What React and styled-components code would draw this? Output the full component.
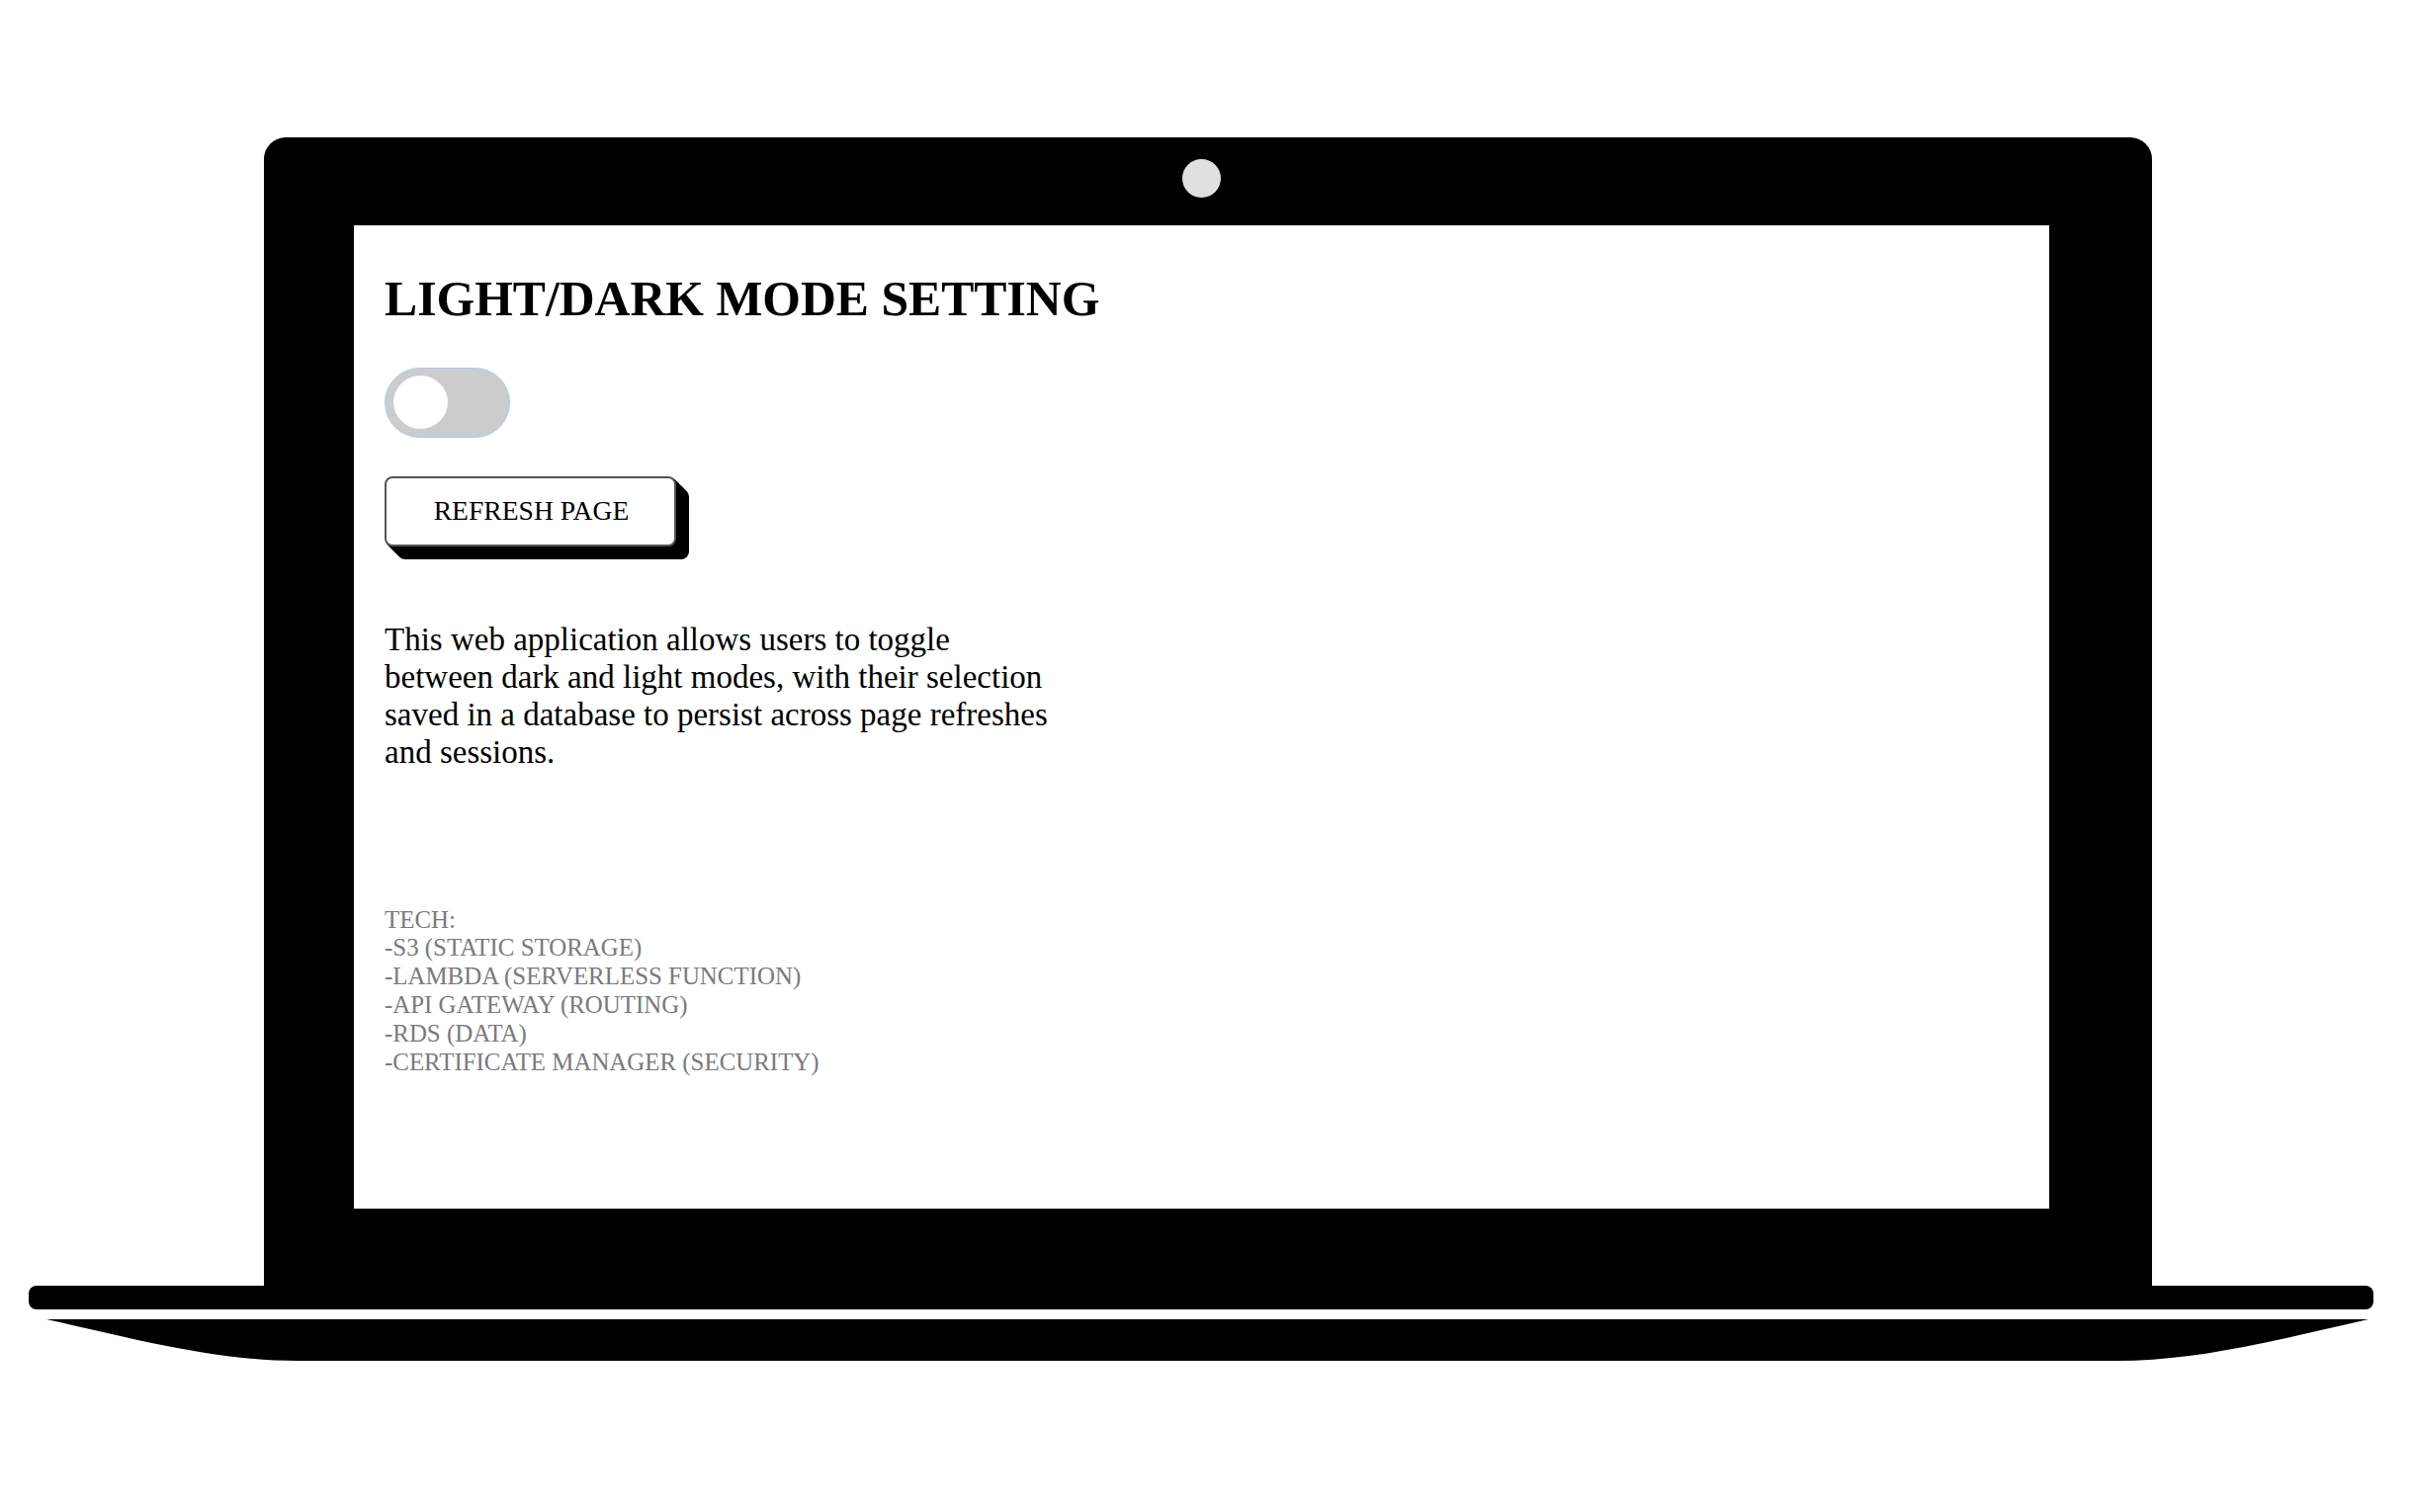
import React from 'react'
import styled, { createGlobalStyle } from 'styled-components'

const ink = '#000'
const paper = '#fff'
const muted = '#7a7a7a'
const serif = `'Liberation Serif', 'Times New Roman', serif`

// stacked offsets give the button its extruded, 3d look
const extrude = Array.from({ length: 13 }, (_, i) => `${i + 1}px ${i + 1}px 0 ${ink}`).join(', ')

const GlobalStyle = createGlobalStyle`
  html, body {
    margin: 0;
    padding: 0;
    background: ${paper};
  }
  body {
    font-family: ${serif};
  }
`

const Stage = styled.div`
  display: flex;
  flex-direction: column;
  align-items: flex-start;
  width: 2440px;
  height: 1530px;
  padding-top: 139px;
  box-sizing: border-box;
  background: ${paper};
`

const Lid = styled.div`
  display: flex;
  flex-direction: column;
  align-items: center;
  box-sizing: border-box;
  width: 1910px;
  height: 1162px;
  margin-left: 267px;
  padding: 22px 104px 0 91px;
  background: ${ink};
  border-radius: 22px 22px 0 0;
`

const Camera = styled.div`
  width: 39px;
  height: 39px;
  margin-bottom: 28px;
  border-radius: 50%;
  background: #e0e0e0;
`

const Screen = styled.div`
  display: flex;
  flex-direction: column;
  align-items: flex-start;
  align-self: stretch;
  box-sizing: border-box;
  height: 995px;
  padding: 46px 31px 0;
  background: ${paper};
  color: ${ink};
`

const Title = styled.h1`
  margin: 0;
  font-family: ${serif};
  font-size: 49.7px;
  font-weight: bold;
  line-height: 57.5px;
`

const Switch = styled.div`
  display: flex;
  align-items: center;
  box-sizing: border-box;
  width: 127px;
  height: 71px;
  margin-top: 40px;
  padding-left: 8px;
  border: 1px solid #a9cbef;
  border-radius: 36px;
  background: #cccccc;
`

const Knob = styled.span`
  width: 55px;
  height: 54px;
  border-radius: 50%;
  background: ${paper};
`

const RefreshButton = styled.button`
  display: flex;
  align-items: center;
  justify-content: center;
  box-sizing: border-box;
  width: 295px;
  height: 71px;
  margin-top: 39px;
  padding: 0 0 0 2px;
  border: 2px solid #555;
  border-radius: 8px;
  background: ${paper};
  color: ${ink};
  font-family: ${serif};
  font-size: 27.6px;
  box-shadow: ${extrude};
`

const About = styled.p`
  width: 680px;
  margin: 75px 0 0;
  font-family: ${serif};
  font-size: 33px;
  line-height: 38px;
`

const TechList = styled.div`
  margin-top: 137px;
  font-family: ${serif};
  font-size: 24.9px;
  line-height: 28.9px;
  color: ${muted};
`

const Bar = styled.div`
  width: 2372px;
  height: 24px;
  margin-left: 29px;
  border-radius: 8px;
  background: ${ink};
`

const BaseSvg = styled.svg`
  display: block;
  margin: 10px 0 0 47px;
`

const Base = () => (
  <BaseSvg width='2349' height='42' viewBox='0 0 2349 42'>
    <path
      d='M0 0 H2349 C2259 20 2179 42 2094 42 H255 C170 42 90 20 0 0 Z'
      fill={ink}
    />
  </BaseSvg>
)

const tech = [
  'TECH:',
  '-S3 (STATIC STORAGE)',
  '-LAMBDA (SERVERLESS FUNCTION)',
  '-API GATEWAY (ROUTING)',
  '-RDS (DATA)',
  '-CERTIFICATE MANAGER (SECURITY)'
]

const App = () => (
  <>
    <GlobalStyle />
    <Stage>
      <Lid>
        <Camera />
        <Screen>
          <Title>LIGHT/DARK MODE SETTING</Title>
          <Switch>
            <Knob />
          </Switch>
          <RefreshButton>REFRESH PAGE</RefreshButton>
          <About>
            This web application allows users to toggle between dark and light
            modes, with their selection saved in a database to persist across
            page refreshes and sessions.
          </About>
          <TechList>
            {tech.map(line => (
              <div key={line}>{line}</div>
            ))}
          </TechList>
        </Screen>
      </Lid>
      <Bar />
      <Base />
    </Stage>
  </>
)

export default App
